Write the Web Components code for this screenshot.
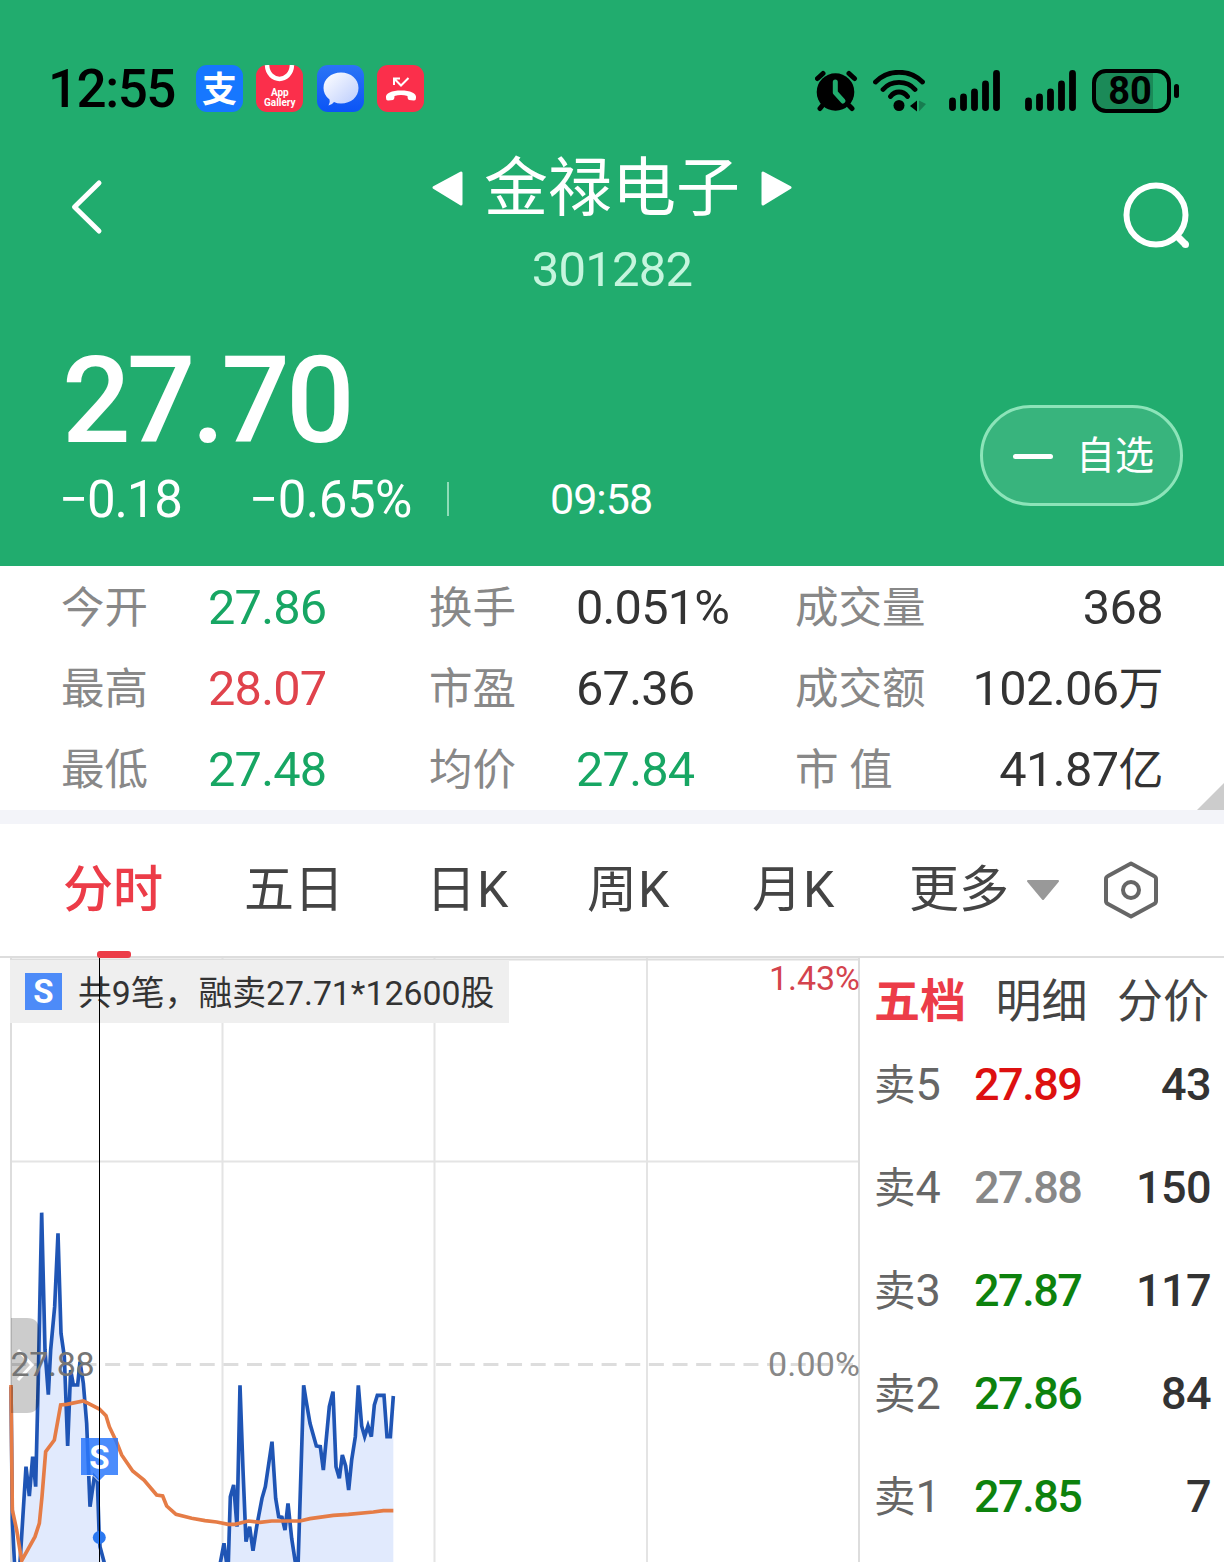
<!DOCTYPE html>
<html lang="zh-CN">
<head>
<meta charset="utf-8">
<title>金禄电子 301282</title>
<style>
    html, body { margin: 0; padding: 0; }
    body {
        width: 1224px;
        height: 1562px;
        overflow: hidden;
        background: #fff;
        color: #333;
        font-family: Roboto, "Noto Sans CJK SC", sans-serif;
        line-height: 1;
    }
</style>
</head>
<body>
<stock-page></stock-page>

<script>
/** Small base class: clones the markup of static `html` into an open shadow root. */
class BaseElement extends HTMLElement {
    constructor() {
        super();
        const template = document.createElement("template");
        template.innerHTML = this.constructor.html;
        this.attachShadow({ mode: "open" }).appendChild(template.content.cloneNode(true));
    }
}

/** Five bars of mobile signal. */
class SignalBars extends BaseElement {
    static html = `
        <style>
            :host { display: block; width: 51px; height: 42px; }
            svg { display: block; }
        </style>
        <svg width="51" height="42" stroke="#000" stroke-width="6.800" stroke-linecap="round">
            <path d="M3.500 31V37.500M14.500 27V37.500M25.500 22V37.500M36.500 14V37.500M47.500 3.500V37.500"/>
        </svg>`;
}

class StatusBar extends BaseElement {
    static html = `
        <style>
            :host {
                display: flex; align-items: center; box-sizing: border-box;
                height: 145px; padding: 33px 45px 0 48px; color: #000;
            }
            svg { display: block; }
            .time { width: 148px; font-size: 53px; line-height: 54px; font-weight: 500; letter-spacing: -1.500px; white-space: nowrap; }
            .apps { display: flex; gap: 13.300px; flex: 1; margin-top: -1px; }
            .app {
                width: 47px; height: 47px; border-radius: 11px; overflow: hidden;
                display: flex; flex-direction: column; align-items: center; justify-content: center;
                color: #fff; background: #fb2f4b;
            }
            .pay { background: #1677ff; }
            .pay span { font-size: 35px; font-weight: 700; padding-top: 4px; }
            .gallery { font-size: 10px; line-height: 9.500px; font-weight: 700; justify-content: flex-start; }
            .msg { background: linear-gradient(#2b74f5, #0b54f6); }
            .right { display: flex; align-items: center; padding-top: 4px; }
            .wifi { margin: 0 22px 0 15px; }
            signal-bars + signal-bars { margin-left: 25px; }
            .battery {
                box-sizing: border-box; width: 79px; height: 44px; margin-left: 16px; padding-right: 3px;
                border: 4px solid #000; border-radius: 14px;
                background: linear-gradient(90deg, #1b8a58 57px, transparent 57px);
                font-size: 38px; line-height: 37px; font-weight: 700; text-align: center;
            }
            .nub { width: 5px; height: 14px; margin-left: 3px; border-radius: 3px; background: #000; }
        </style>
        <div class="time">12:55</div>
        <div class="apps">
            <div class="app pay"><span>支</span></div>
            <div class="app gallery">
                <svg width="47" height="23"><path d="M11 0C12 18.500 35 18.500 36 0" fill="none" stroke="#fff" stroke-width="4.500"/></svg>
                <span>App</span><span>Gallery</span>
            </div>
            <div class="app msg">
                <svg width="47" height="47">
                    <defs><linearGradient id="b" x2="1" y2="1"><stop stop-color="#fff"/><stop offset="1" stop-color="#b9cbfd"/></linearGradient></defs>
                    <path d="M24 7.500C34 7.500 41.500 14 41.500 23S34 38.500 24 38.500Q20 38.500 17 37Q15 40 11.500 40.500Q13.500 37 12.500 34.500Q6.500 30 6.500 23C6.500 14 14 7.500 24 7.500Z" fill="url(#b)"/>
                </svg>
            </div>
            <div class="app">
                <svg width="47" height="47" fill="none" stroke="#fff">
                    <path d="M17 20V13.500H23M17.500 14L24 20.500L31.500 13" stroke-width="2"/>
                    <path d="M9 33C8 28 15 25.500 24 25.500S40 28 39 33Q39 36 36.500 35.500L32 35Q30.500 34.500 30.500 31Q24 29 17.500 31Q17.500 34.500 16 35L11.500 35.500Q9 36 9 33Z" fill="#fff" stroke="none"/>
                </svg>
            </div>
        </div>
        <div class="right">
            <svg width="43" height="42" stroke="#000" stroke-width="5" stroke-linecap="round" fill="none">
                <circle cx="20.500" cy="22" r="18.800" fill="#000" stroke="none"/>
                <path d="M2.500 8.500L8 3.500M34 3.500L39.500 8.500M7 36L5 38.500M34.500 36L37 38.500"/>
                <path d="M20.300 12V22.500L28 31" stroke="#21ac6e" stroke-linejoin="round"/>
            </svg>
            <svg class="wifi" width="54" height="42" stroke="#000" stroke-width="4.800" stroke-linecap="round" fill="none">
                <path d="M2.500 12C15-1 37-1 49.500 12M10 19.500C18 10 34 10 42 19.500M17.500 26.500C22 20.500 30 20.500 34.500 26.500"/>
                <circle cx="26" cy="35.500" r="5.500" fill="#000" stroke="none"/>
                <path d="M37 36L44 30.500V41.500Z" fill="#000" stroke="none"/>
                <path d="M46 30.500L53 34L46 41.500Z" fill="#177d50" stroke="none"/>
            </svg>
            <signal-bars></signal-bars>
            <signal-bars></signal-bars>
            <div class="battery">80</div>
            <div class="nub"></div>
        </div>`;
}

class StockNav extends BaseElement {
    static html = `
        <style>
            :host {
                display: grid; grid-template-columns: 150px 1fr 150px; align-items: start;
                height: 185px; color: #fff;
            }
            svg { display: block; }
            .back { margin: 33px 0 0 67px; }
            .search { margin: 36px 0 0 48px; }
            .title { display: flex; align-items: center; justify-content: center; gap: 20px; height: 86px; }
            .title svg { margin-top: 2px; }
            h1 { margin: 0; font-size: 64px; line-height: 80px; font-weight: 400; padding-top: 2px; }
            .code { font-size: 49px; line-height: 78px; letter-spacing: -.8px; text-align: center; color: #c5f5de; }
        </style>
        <svg class="back" width="38" height="58" fill="none" stroke="#fff" stroke-width="5" stroke-linecap="round" stroke-linejoin="round"><path d="M32 5L7.500 29L32 53"/></svg>
        <div>
            <div class="title">
                <svg width="33" height="38"><path d="M3 17.500L30 3V34Z" fill="#fff" stroke="#fff" stroke-width="3" stroke-linejoin="round"/></svg>
                <h1><slot></slot></h1>
                <svg width="33" height="38"><path d="M30 17.500L3 3V34Z" fill="#fff" stroke="#fff" stroke-width="3" stroke-linejoin="round"/></svg>
            </div>
            <div class="code"><slot name="code"></slot></div>
        </div>
        <svg class="search" width="70" height="72" fill="none" stroke="#fff" stroke-width="6">
            <circle cx="34" cy="34" r="29.500"/>
            <path d="M55 55L63.500 63.500" stroke-width="7"/>
            <circle cx="63.500" cy="63.500" r="3.500" fill="#fff" stroke="none"/>
        </svg>`;
}

class QuoteHead extends BaseElement {
    static html = `
        <style>
            :host { display: flex; justify-content: space-between; height: 236px; padding: 0 41px 0 59px; color: #fff; }
            .price { height: 130px; margin: 6px 0 0 3px; font-size: 121px; line-height: 130px; font-weight: 500; letter-spacing: -4px; }
            .change { display: flex; align-items: center; height: 66px; font-size: 51px; }
            .diff { width: 190px; letter-spacing: -1.200px; }
            .pct { width: 198px; letter-spacing: -.5px; }
            .bar { width: 2px; height: 34px; background: #8fdcb8; }
            .time { margin-left: 101px; font-size: 43px; letter-spacing: -1px; }
            button {
                display: flex; align-items: center; gap: 23px; box-sizing: border-box;
                width: 203px; height: 101px; margin-top: 75px; padding: 2px 0 0 30px;
                border: 3px solid #8ce4b9; border-radius: 51px; background: #38b47d;
                color: #fff; font: inherit; font-size: 39px;
            }
            i { width: 40px; height: 5px; border-radius: 3px; background: #fff; }
        </style>
        <div>
            <div class="price">27.70</div>
            <div class="change">
                <span class="diff">−0.18</span><span class="pct">−0.65%</span><span class="bar"></span><span class="time">09:58</span>
            </div>
        </div>
        <button><i></i><span>自选</span></button>`;
}

/** Label and value pair; display: contents puts both straight in the grid of the parent. */
class StatItem extends BaseElement {
    static html = `
        <style>
            :host { display: contents; }
            .label { font-size: 43.500px; color: #888; white-space: pre; }
            .value { font-size: 48.700px; letter-spacing: -.8px; white-space: nowrap; color: var(--stat-color, #333); }
            :host([end]) .value { text-align: right; margin-right: -1px; letter-spacing: -.6px; }
            ::slotted(small) { font-size: 45px; line-height: 1; }
        </style>
        <span class="label"></span>
        <span class="value"><slot></slot></span>`;

    connectedCallback() {
        this.shadowRoot.querySelector(".label").textContent = this.getAttribute("label");
    }
}

class StatGrid extends BaseElement {
    static html = `
        <style>
            :host {
                position: relative; display: grid; align-items: center; box-sizing: border-box;
                grid-template-columns: 147px 221px 147px 219px 132px 1fr; grid-auto-rows: 81px;
                height: 258px; padding: 2px 62px 0 61px; border-bottom: 14px solid #f3f4f9;
            }
            .fold { position: absolute; right: 0; bottom: 0; display: block; }
        </style>
        <slot></slot>
        <svg class="fold" width="27" height="27"><path d="M27 0V27H0Z" fill="#ccc"/></svg>`;
}

class ChartTabs extends BaseElement {
    static html = `
        <style>
            :host {
                position: relative; display: grid; align-items: center; box-sizing: border-box;
                grid-template-columns: 181px 182px 161px 165px 157px 195px auto;
                height: 134px; padding: 0 0 0 63px; border-bottom: 2px solid #ddd;
                font-size: 50px; color: #444;
            }
            .on { color: #ec3c48; font-weight: 500; }
            .on::after {
                content: ""; position: absolute; left: 97px; bottom: -2px; z-index: 1;
                width: 34px; height: 7px; border-radius: 3px; background: #ec3c48;
            }
            .k { letter-spacing: 1px; }
            .more { display: flex; align-items: center; gap: 17px; }
            svg { display: block; }
        </style>
        <span class="on">分时</span><span>五日</span><span class="k">日K</span><span class="k">周K</span><span class="k">月K</span>
        <span class="more">更多<svg width="34" height="22"><path d="M2 2H32L17 20Z" fill="#999" stroke="#999" stroke-width="2" stroke-linejoin="round"/></svg></span>
        <svg width="54" height="58" fill="none" stroke="#666" stroke-width="4" stroke-linejoin="round">
            <path d="M27 2.500L50 15Q52 16 52 18V40Q52 42 50 43L27 55.500L4 43Q2 42 2 40V18Q2 16 4 15Z"/>
            <circle cx="27" cy="29" r="8"/>
        </svg>`;
}

/* Price and average, in thirds of a pixel from the left edge and the 1190 line. */
const PRICE_OPEN = "33,590 37,990 45,1150 58,1150 78,830 88,918 98,800 107,890 115,560 125,68 135,480 145,614 152,480 164,350 174,130 183,430 193,500 203,768 212,540 220,585 233,585 240,515 250,580 260,700 270,950 283,860 292,870 297,1020 300,1070 316,1130";
const PRICE_LATE = "655,1150 672,1060 684,1150 691,920 701,885 711,1010 720,586 729,840 738,1055 749,1010 759,1082 770,1010 786,925 796,890 816,755 827,925 836,980 846,982 855,1020 864,940 875,1045 888,1130 894,1130 911,586 918,630 930,700 949,768 961,770 970,840 988,650 999,605 1008,830 1018,865 1027,795 1037,828 1046,900 1055,810 1066,740 1075,586 1085,708 1094,740 1104,708 1114,740 1123,645 1132,616 1152,616 1161,740 1171,740 1180,618";
const AVERAGE = "33,585 37,960 50,1020 65,1112 105,1040 118,1000 126,920 137,785 163,750 182,645 200,643 250,633 265,640 298,657 318,677 328,710 350,757 365,795 398,843 432,870 470,915 488,918 500,948 528,973 575,985 615,992 650,996 685,1003 705,1003 745,993 780,997 815,993 900,993 930,986 1000,976 1045,973 1120,966 1150,962 1180,962";

class IntradayChart extends BaseElement {
    static html = `
        <style>
            :host { position: relative; display: block; height: 604px; overflow: hidden; }
            svg { display: block; }
            text { font-size: 34px; }
            .tip {
                position: absolute; left: 10px; top: 2px; width: 499px; height: 63px; box-sizing: border-box;
                display: flex; align-items: center; gap: 16px; padding-left: 15px; background: #efefef;
                font-size: 33.800px; white-space: nowrap; color: #333;
            }
            .tip span { padding-top: 4px; }
            .tip b {
                width: 37px; height: 37px; background: #4d8bf8; color: #fff;
                font-size: 33px; line-height: 38px; text-align: center;
            }
            .cross { position: absolute; left: 99px; top: 0; width: 1px; height: 604px; background: #000; }
        </style>
        <svg width="860" height="604" viewBox="0 958 860 604">
            <g fill="none" stroke="#e4e4e4" stroke-width="2">
                <path d="M222.500 958V1562M434.500 958V1562M647 958V1562M11 1161.500H859"/>
                <path d="M11 958V1562M859 958V1562M10 959.500H860" stroke="#ddd"/>
                <path d="M10.600 1364.500H859" stroke="#ddd" stroke-width="3" stroke-dasharray="15 8.640"/>
            </g>
            <g transform="translate(0 1190) scale(.33333)" fill="none" stroke-width="11">
                <path d="M58,1150 L${PRICE_OPEN.slice(PRICE_OPEN.indexOf("78,830"))} Z M${PRICE_LATE} V1150Z" fill="#e1eafd"/>
                <polyline points="${PRICE_OPEN}" stroke="#1f55b5"/>
                <polyline points="${PRICE_LATE}" stroke="#1f55b5"/>
                <polyline points="${AVERAGE}" stroke="#e57c46"/>
            </g>
            <path d="M11 1318H27Q39 1318 39 1330V1401Q39 1413 27 1413H11Z" opacity=".2"/>
            <path d="M18 1350L32 1365L18 1380" fill="none" stroke="#fff" stroke-width="3"/>
            <text x="10.500" y="1376" textLength="84" fill="#757575">27.88</text>
            <text x="769" y="990" textLength="91" fill="#d4434d">1.43%</text>
            <text x="768" y="1376" textLength="92" fill="#888">0.00%</text>
            <path d="M81 1438H118V1475H105L99 1481L93 1475H81Z" fill="#2b78fb" opacity=".85"/>
            <path d="M80.500 1475.500H93L99 1481.500" fill="none" stroke="#e1eafd"/>
            <circle cx="99.300" cy="1537.500" r="6.500" fill="#2b78f0"/>
            <text x="99.500" y="1468.500" text-anchor="middle" style="font-size:33px;font-weight:700" fill="#fff">S</text>
        </svg>
        <div class="tip"><b>S</b><span>共9笔，融卖27.71*12600股</span></div>
        <div class="cross"></div>`;
}

class OrderRow extends BaseElement {
    static html = `
        <style>
            :host { display: grid; grid-template-columns: 100px 120px 1fr; align-items: center; height: 103px; font-size: 45px; }
            .label { font-size: 41.500px; color: #666; white-space: nowrap; }
            .label span { font-size: 45px; line-height: 1; }
            .price { font-weight: 500; letter-spacing: -1.500px; color: var(--price-color, #0d820d); }
            .volume { font-weight: 500; letter-spacing: -.6px; text-align: right; }
        </style>
        <span class="label">卖<span></span></span>
        <span class="price"></span>
        <span class="volume"></span>`;

    connectedCallback() {
        const root = this.shadowRoot;
        root.querySelector(".label span").textContent = this.getAttribute("level");
        root.querySelector(".price").textContent = this.getAttribute("price");
        root.querySelector(".volume").textContent = this.getAttribute("volume");
    }
}

class OrderBook extends BaseElement {
    static html = `
        <style>
            :host { display: block; padding: 0 13px 0 14px; }
            nav { display: flex; justify-content: space-between; height: 75px; font-size: 46px; line-height: 87px; color: #444; margin-right: 2px; }
            .on { color: #ec3c48; font-weight: 700; }
        </style>
        <nav><span class="on">五档</span><span>明细</span><span>分价</span></nav>
        <slot></slot>`;
}

class StockPage extends BaseElement {
    static html = `
        <style>
            :host { display: block; }
            header { height: 566px; background: #21ac6e; }
            .body { display: grid; grid-template-columns: 860px 1fr; }
            .up { --stat-color: #e0434c; }
            .down { --stat-color: #17a663; }
        </style>
        <header>
            <status-bar></status-bar>
            <stock-nav>金禄电子<span slot="code">301282</span></stock-nav>
            <quote-head></quote-head>
        </header>
        <stat-grid>
            <stat-item label="今开" class="down">27.86</stat-item>
            <stat-item label="换手">0.051%</stat-item>
            <stat-item label="成交量" end>368</stat-item>
            <stat-item label="最高" class="up">28.07</stat-item>
            <stat-item label="市盈">67.36</stat-item>
            <stat-item label="成交额" end>102.06<small>万</small></stat-item>
            <stat-item label="最低" class="down">27.48</stat-item>
            <stat-item label="均价" class="down">27.84</stat-item>
            <stat-item label="市 值" end>41.87<small>亿</small></stat-item>
        </stat-grid>
        <chart-tabs></chart-tabs>
        <div class="body">
            <intraday-chart></intraday-chart>
            <order-book>
                <order-row level="5" price="27.89" volume="43" style="--price-color: #dd1010"></order-row>
                <order-row level="4" price="27.88" volume="150" style="--price-color: #888"></order-row>
                <order-row level="3" price="27.87" volume="117"></order-row>
                <order-row level="2" price="27.86" volume="84"></order-row>
                <order-row level="1" price="27.85" volume="7"></order-row>
            </order-book>
        </div>`;
}

customElements.define("signal-bars", SignalBars);
customElements.define("status-bar", StatusBar);
customElements.define("stock-nav", StockNav);
customElements.define("quote-head", QuoteHead);
customElements.define("stat-item", StatItem);
customElements.define("stat-grid", StatGrid);
customElements.define("chart-tabs", ChartTabs);
customElements.define("intraday-chart", IntradayChart);
customElements.define("order-row", OrderRow);
customElements.define("order-book", OrderBook);
customElements.define("stock-page", StockPage);
</script>
</body>
</html>
